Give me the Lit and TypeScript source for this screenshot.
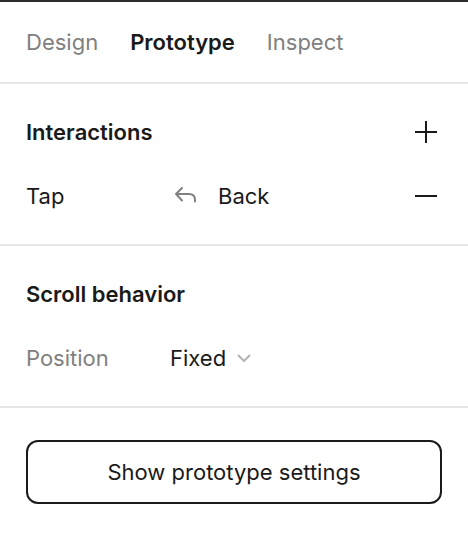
import { LitElement, html, css } from "lit";
import { customElement, state } from "lit/decorators.js";

@customElement("app-root")
export class AppRoot extends LitElement {
  static styles = css`
    :host {
      display: block;
      min-height: 100vh;
      box-sizing: border-box;
      background: #fff;
      border-top: 2px solid #2c2c2c;
      color: #1a1a1a;
      font: 400 22px/32px Inter, sans-serif;
    }
    * { box-sizing: border-box; }
    button, select { font: inherit; color: inherit; background: none; border: 0; margin: 0; padding: 0; }
    button { cursor: pointer; }
    svg { display: block; fill: none; stroke: currentColor; stroke-width: 2; }
    .tabs { display: flex; gap: 32px; padding: 24px 26px; border-bottom: 2px solid #e5e5e5; }
    .tab { color: #808080; white-space: nowrap; }
    .tab.active { color: #1a1a1a; font-weight: 600; }
    .section { display: grid; gap: 32px; padding: 32px 26px; border-bottom: 2px solid #e5e5e5; }
    .head { display: flex; justify-content: space-between; align-items: center; }
    h2 { margin: 0; font-size: 22px; line-height: 32px; font-weight: 600; }
    .row { display: grid; grid-template-columns: 144px 1fr auto; align-items: center; }
    .action { display: flex; align-items: center; gap: 20px; }
    .action svg { color: #808080; margin-left: 4px; stroke-linecap: round; stroke-linejoin: round; }
    .label { color: #808080; }
    .icon { width: 32px; height: 32px; display: grid; place-items: center; }
    .pick { display: flex; align-items: center; gap: 10px; }
    select { appearance: none; outline: none; height: 32px; }
    .pick svg { color: #b3b3b3; pointer-events: none; }
    .footer { padding: 32px 26px; }
    .settings { width: 100%; padding: 14px; border: 2px solid #1a1a1a; border-radius: 12px; }
  `;

  @state() private tab = "Prototype";

  render() {
    return html`
      <nav class="tabs">
        ${["Design", "Prototype", "Inspect"].map(
          (t) => html`<button class="tab ${t === this.tab ? "active" : ""}" @click=${() => (this.tab = t)}>${t}</button>`
        )}
      </nav>
      <section class="section">
        <div class="head">
          <h2>Interactions</h2>
          <button class="icon" aria-label="Add interaction">
            <svg width="22" height="22" viewBox="0 0 22 22"><path d="M11 0V22M0 11H22" /></svg>
          </button>
        </div>
        <div class="row">
          <span>Tap</span>
          <span class="action">
            <svg width="24" height="20" viewBox="0 0 24 20"><path d="M8 2L2 8L8 14.5M2 8H15Q21 8 21 14V15.5" /></svg>
            Back
          </span>
          <button class="icon" aria-label="Remove interaction">
            <svg width="22" height="22" viewBox="0 0 22 22"><path d="M0 11H22" /></svg>
          </button>
        </div>
      </section>
      <section class="section">
        <h2>Scroll behavior</h2>
        <div class="row">
          <label class="label" for="position">Position</label>
          <span class="pick">
            <select id="position"><option>Fixed</option></select>
            <svg width="14" height="10" viewBox="0 0 14 10"><path d="M1 2L7 8L13 2" /></svg>
          </span>
        </div>
      </section>
      <div class="footer"><button class="settings">Show prototype settings</button></div>
    `;
  }
}
